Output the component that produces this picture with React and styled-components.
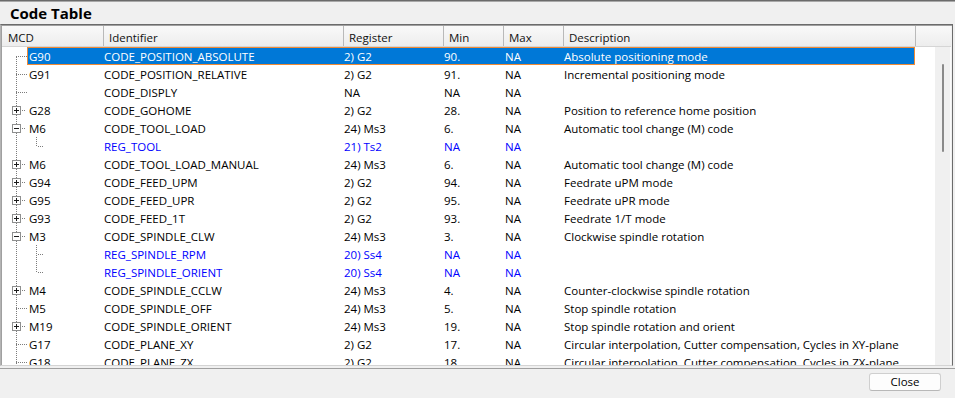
import React from 'react';
import styled, { createGlobalStyle } from 'styled-components';

const rows = [
  { mcd: 'G90', id: 'CODE_POSITION_ABSOLUTE', reg: '2) G2', min: '90.', max: 'NA', desc: 'Absolute positioning mode', first: true, selected: true },
  { mcd: 'G91', id: 'CODE_POSITION_RELATIVE', reg: '2) G2', min: '91.', max: 'NA', desc: 'Incremental positioning mode' },
  { mcd: '', id: 'CODE_DISPLY', reg: 'NA', min: 'NA', max: 'NA', desc: '' },
  { mcd: 'G28', id: 'CODE_GOHOME', reg: '2) G2', min: '28.', max: 'NA', desc: 'Position to reference home position', toggle: 'plus' },
  { mcd: 'M6', id: 'CODE_TOOL_LOAD', reg: '24) Ms3', min: '6.', max: 'NA', desc: 'Automatic tool change (M) code', toggle: 'minus' },
  { child: true, last: true, id: 'REG_TOOL', reg: '21) Ts2', min: 'NA', max: 'NA' },
  { mcd: 'M6', id: 'CODE_TOOL_LOAD_MANUAL', reg: '24) Ms3', min: '6.', max: 'NA', desc: 'Automatic tool change (M) code', toggle: 'plus' },
  { mcd: 'G94', id: 'CODE_FEED_UPM', reg: '2) G2', min: '94.', max: 'NA', desc: 'Feedrate uPM mode', toggle: 'plus' },
  { mcd: 'G95', id: 'CODE_FEED_UPR', reg: '2) G2', min: '95.', max: 'NA', desc: 'Feedrate uPR mode', toggle: 'plus' },
  { mcd: 'G93', id: 'CODE_FEED_1T', reg: '2) G2', min: '93.', max: 'NA', desc: 'Feedrate 1/T mode', toggle: 'plus' },
  { mcd: 'M3', id: 'CODE_SPINDLE_CLW', reg: '24) Ms3', min: '3.', max: 'NA', desc: 'Clockwise spindle rotation', toggle: 'minus' },
  { child: true, id: 'REG_SPINDLE_RPM', reg: '20) Ss4', min: 'NA', max: 'NA' },
  { child: true, last: true, id: 'REG_SPINDLE_ORIENT', reg: '20) Ss4', min: 'NA', max: 'NA' },
  { mcd: 'M4', id: 'CODE_SPINDLE_CCLW', reg: '24) Ms3', min: '4.', max: 'NA', desc: 'Counter-clockwise spindle rotation', toggle: 'plus' },
  { mcd: 'M5', id: 'CODE_SPINDLE_OFF', reg: '24) Ms3', min: '5.', max: 'NA', desc: 'Stop spindle rotation' },
  { mcd: 'M19', id: 'CODE_SPINDLE_ORIENT', reg: '24) Ms3', min: '19.', max: 'NA', desc: 'Stop spindle rotation and orient', toggle: 'plus' },
  { mcd: 'G17', id: 'CODE_PLANE_XY', reg: '2) G2', min: '17.', max: 'NA', desc: 'Circular interpolation, Cutter compensation, Cycles in XY-plane' },
  { mcd: 'G18', id: 'CODE_PLANE_ZX', reg: '2) G2', min: '18.', max: 'NA', desc: 'Circular interpolation, Cutter compensation, Cycles in ZX-plane' },
];

const columns = ['MCD', 'Identifier', 'Register', 'Min', 'Max', 'Description', ''];

// dotted connector lines + expander box for one tree row
function TreeLines({ row }) {
  const dots = { stroke: '#7c7c7c', strokeWidth: 1, strokeDasharray: '1 1', fill: 'none' };
  return (
    <svg width="25" height="18" overflow="visible" shapeRendering="crispEdges">
      {row.toggle ? (
        <>
          <path d="M14.5 0 V5 M14.5 14 V18 M20 9.5 H23" {...dots} />
          <rect x="10.5" y="5.5" width="8" height="8" fill="#fff" stroke="#8e8f8f" />
          <path d={row.toggle === 'plus' ? 'M12 9.5 H17 M14.5 7 V12' : 'M12 9.5 H17'} stroke="#1c1c1c" />
        </>
      ) : (
        <path d={(row.first ? 'M14.5 10 V18' : 'M14.5 0 V18') + (row.child ? '' : ' M14 9.5 H25')} {...dots} />
      )}
      {row.child && (
        <path d={(row.last ? 'M34.5 0 V10' : 'M34.5 0 V18') + ' M36 9.5 H42'} {...dots} />
      )}
    </svg>
  );
}

export default function App() {
  return (
    <>
      <GlobalStyle />
      <Window>
        <TitleBar>Code Table</TitleBar>
        <TableFrame>
          <HeaderRow>
            {columns.map((c, i) => (
              <HeaderCell key={i} $first={i === 0}>{c}</HeaderCell>
            ))}
          </HeaderRow>
          <Body>
            <Rows>
              {rows.map((r, i) => (
                <Row key={r.id + i}>
                  <Tree><TreeLines row={r} /></Tree>
                  <Cells $selected={r.selected} $child={r.child}>
                    <Cell $pad={2}>{r.mcd}</Cell>
                    <Cell>{r.id}</Cell>
                    <Cell>{r.reg}</Cell>
                    <Cell>{r.min}</Cell>
                    <Cell $pad={2}>{r.max}</Cell>
                    <Cell>{r.desc}</Cell>
                  </Cells>
                </Row>
              ))}
            </Rows>
            <ScrollTrack>
              <ScrollThumb />
            </ScrollTrack>
          </Body>
        </TableFrame>
        <Footer>
          <Button>Close</Button>
        </Footer>
      </Window>
    </>
  );
}

const GlobalStyle = createGlobalStyle`
  html, body {
    margin: 0;
    padding: 0;
    background: #f0f0f0;
  }
  body {
    font-family: "Open Sans", "Liberation Sans", sans-serif;
    font-size: 11.5px;
    color: #000;
  }
`;

const Window = styled.div`
  width: 955px;
  height: 398px;
  display: flex;
  flex-direction: column;
  background: #f0f0f0;
  overflow: hidden;
`;

const TitleBar = styled.div`
  height: 24px;
  border-top: 1px solid #6b6b6b;
  box-shadow: inset 0 1px 0 #a8a8a8;
  padding: 1px 0 0 10px;
  box-sizing: border-box;
  display: flex;
  align-items: center;
  font-weight: 700;
  font-size: 15px;
  color: #000;
`;

const TableFrame = styled.div`
  margin-right: 2px;
  border-top: 1px solid #6b6b6b;
  border-left: 1px solid #b4b4b4;
  border-right: 1px solid #6b6b6b;
  border-bottom: 1px solid #d4d4d4;
  padding: 1px 1px 0 1px;
  box-shadow: inset 1px 1px 0 #a0a0a0;
  display: flex;
  flex-direction: column;
`;

const HeaderRow = styled.div`
  display: grid;
  grid-template-columns: 102px 240px 100px 60px 60px 352px 1fr;
  grid-template-rows: 20px;
  height: 21px;
  box-sizing: border-box;
  border-bottom: 1px solid #d5d5d5;
  background: linear-gradient(#f9f9f9, #ededed);
`;

const HeaderCell = styled.div`
  padding-left: ${p => (p.$first ? 6 : 5)}px;
  border-right: 1px solid #b9b9b9;
  line-height: 23px;
  white-space: nowrap;
  overflow: hidden;
  color: #111;

  &:last-child {
    border-right: none;
  }
`;

const Body = styled.div`
  height: 318px;
  display: flex;
`;

const Rows = styled.div`
  flex: 1;
  background: #fff;
  overflow: hidden;
`;

const Row = styled.div`
  display: flex;
  height: 18px;
`;

const Tree = styled.div`
  width: 25px;
  flex-shrink: 0;

  svg {
    display: block;
  }
`;

const Cells = styled.div`
  display: grid;
  grid-template-columns: 76px 240px 100px 60px 60px 352px;
  grid-template-rows: 18px;
  height: 18px;
  line-height: 20px;
  color: ${p => (p.$selected ? '#fff' : p.$child ? '#0000ff' : '#000')};
  background: ${p => (p.$selected ? '#0078d7' : 'transparent')};
  box-shadow: ${p => (p.$selected ? 'inset 0 0 0 1px #ef8a35' : 'none')};
`;

const Cell = styled.div`
  padding-left: ${p => p.$pad || 1}px;
  white-space: nowrap;
  overflow: hidden;
`;

const ScrollTrack = styled.div`
  width: 16px;
  flex-shrink: 0;
  background: #f0f0f0;
  border-right: 1px solid #fbfbfb;
  padding-top: 17px;
  box-sizing: border-box;
`;

const ScrollThumb = styled.div`
  width: 2px;
  height: 88px;
  margin-left: 7px;
  border-radius: 1px;
  background: #8a8a8a;
`;

const Footer = styled.div`
  margin-top: 2px;
  border-top: 1px solid #a0a0a0;
  flex: 1;
  display: flex;
  justify-content: flex-end;
  align-items: flex-start;
  padding: 4px 14px 0 0;
`;

const Button = styled.button`
  width: 72px;
  height: 18px;
  padding: 0;
  font-family: "Open Sans", "Liberation Sans", sans-serif;
  font-size: 11.5px;
  line-height: 16px;
  color: #000;
  background: #fdfdfd;
  border: 1px solid #cfcfcf;
  border-bottom-color: #b8b8b8;
  border-radius: 3px;
`;
